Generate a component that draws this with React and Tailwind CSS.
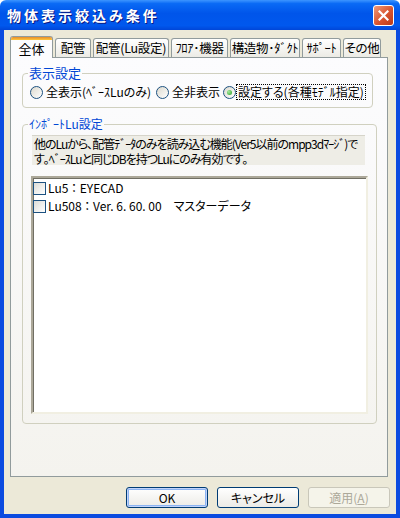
import React from 'react';

const TABS = [
  { label: '全体', w: 'w-[43px]', active: true },
  { label: '配管', w: 'w-[36px]' },
  { label: '配管(Lu設定)', w: 'w-[76px]' },
  { label: 'ﾌﾛｱ･機器', w: 'w-[57px]' },
  { label: '構造物･ﾀﾞｸﾄ', w: 'w-[70px]' },
  { label: 'ｻﾎﾟｰﾄ', w: 'w-[39px]' },
  { label: 'その他', w: 'w-[38px]' },
];

function Tab({ label, w, active }) {
  if (active) {
    return (
      <div className={`${w} relative z-10 -mb-px h-[22px] flex flex-col border border-b-0 border-[#919B9C] rounded-t-[3px] bg-[#FCFCFE] overflow-hidden`}>
        <div className="h-[3px] bg-[linear-gradient(to_bottom,#E68B2C,#FFC73C)]" />
        <div className="flex-1 flex items-center justify-center pb-[1px] text-[13px]">{label}</div>
      </div>
    );
  }
  return (
    <div className={`${w} h-[19px] flex items-center justify-center border border-b-0 border-[#919B9C] rounded-t-[3px] bg-[linear-gradient(to_bottom,#FFFFFF,#ECEBE5)] whitespace-nowrap text-[12.5px] tracking-[-0.3px]`}>
      {label}
    </div>
  );
}

function Radio({ checked }) {
  return (
    <span className="w-[13px] h-[13px] shrink-0 rounded-full border border-[#1C5180] bg-[linear-gradient(135deg,#DCD9CE,#FFFFFF)] flex items-center justify-center">
      {checked && <span className="w-[5px] h-[5px] rounded-full bg-[radial-gradient(circle_at_35%_35%,#A8EA9F,#21A121)]" />}
    </span>
  );
}

function Check() {
  return (
    <span className="w-[13px] h-[13px] shrink-0 border border-[#1C5180] bg-[linear-gradient(135deg,#DCDCD7,#FFFFFF)]" />
  );
}

function Button({ children, variant }) {
  const base = 'w-[82px] h-[21px] rounded-[3px] border flex items-center justify-center';
  if (variant === 'default') {
    return (
      <button className={`${base} border-[#003C74] bg-[linear-gradient(to_bottom,#FFFFFF,#ECEBE6)] shadow-[inset_0_0_0_1px_#C1D3FB,inset_0_0_0_2px_#8CB4F2]`}>
        {children}
      </button>
    );
  }
  if (variant === 'disabled') {
    return (
      <button className={`${base} border-[#C9C7BA] bg-[#F5F4EA] text-[#ACA899]`}>{children}</button>
    );
  }
  return (
    <button className={`${base} border-[#003C74] bg-[linear-gradient(to_bottom,#FFFFFF,#ECEBE6)]`}>{children}</button>
  );
}

export default function App() {
  return (
    <div className="w-[400px] h-[518px] flex flex-col font-['MS_UI_Gothic','Noto_Sans_CJK_JP',sans-serif] text-[12px] leading-[14px] text-black [font-feature-settings:'palt']">
      {/* title bar */}
      <div className="h-[30px] shrink-0 flex items-center justify-between rounded-t-[6px] bg-[linear-gradient(to_bottom,#3D95FF_0%,#0A6AF5_12%,#0055EA_45%,#0058EE_85%,#0046D8_100%)]">
        <span className="pl-[7px] text-white font-bold text-[14px] tracking-[3px] [text-shadow:1px_1px_#0A1883]">
          物体表示絞込み条件
        </span>
        <div className="mr-[6px] w-[21px] h-[21px] rounded-[3px] border border-white bg-[linear-gradient(135deg,#F09A7A,#D8542F_55%,#B83A18)] flex items-center justify-center">
          <svg width="11" height="11" viewBox="0 0 11 11">
            <path d="M1.5 1.5 L9.5 9.5 M9.5 1.5 L1.5 9.5" stroke="#fff" strokeWidth="2.2" strokeLinecap="square" />
          </svg>
        </div>
      </div>

      {/* body */}
      <div className="flex-1 flex flex-col bg-[#ECE9D8] border-x-4 border-b-4 border-[#0B4BE0]">
        <div className="pt-[6px] pl-[6px] pr-[8px] flex flex-col">
          <div className="h-[21px] flex items-end gap-[2px]">
            {TABS.map((t) => (
              <Tab key={t.label} {...t} />
            ))}
          </div>

          <div className="h-[420px] border border-[#919B9C] bg-[linear-gradient(to_bottom,#FCFCFE,#F4F3EE)] flex flex-col pl-[11px]">
            <fieldset className="mt-[8px] w-[351px] h-[42px] border border-[#D0D0BF] rounded-[4px]">
              <legend className="ml-[5px] px-[1px] text-[#0046D5] text-[13px]">表示設定</legend>
              <div className="mt-[5px] pl-[7px] flex items-center">
                <label className="w-[126px] flex items-center gap-[3px]">
                  <Radio />
                  <span>全表示(ﾍﾞｰｽLuのみ)</span>
                </label>
                <label className="w-[67px] flex items-center gap-[3px]">
                  <Radio />
                  <span>全非表示</span>
                </label>
                <label className="flex items-center gap-[1px]">
                  <Radio checked />
                  <span className="px-[1px] outline outline-1 outline-dotted outline-black">設定する(各種ﾓﾃﾞﾙ指定)</span>
                </label>
              </div>
            </fieldset>

            <fieldset className="mt-[9px] w-[355px] h-[307px] border border-[#D0D0BF] rounded-[4px]">
              <legend className="ml-[5px] px-[1px] text-[#0046D5]">ｲﾝﾎﾟｰﾄLu設定</legend>
              <div className="mt-[4px] ml-[9px] w-[333px] h-[30px] bg-[#EEEDE6] border-t border-[#D6D4CA] pl-[2px] leading-[15px] tracking-[-1px]">
                <p className="whitespace-nowrap">他のLuから､配管ﾃﾞｰﾀのみを読み込む機能(Ver5以前のmpp3dﾏｰｼﾞ)で</p>
                <p className="whitespace-nowrap">す｡ﾍﾞｰｽLuと同じDBを持つLuにのみ有効です｡</p>
              </div>
              <div className="mt-[11px] ml-[8px] w-[337px] h-[238px] bg-white border-2 border-t-[#ACA899] border-l-[#ACA899] border-b-[#F1EFE2] border-r-[#F1EFE2] shadow-[inset_1px_1px_0_#716F64] pt-[1px]">
                <div className="h-[18px] flex items-center gap-[2px]">
                  <Check />
                  <span>Lu5 ： EYECAD</span>
                </div>
                <div className="h-[18px] flex items-center gap-[2px]">
                  <Check />
                  <span>Lu508 ： Ver. 6. 60. 00　マスターデータ</span>
                </div>
              </div>
            </fieldset>
          </div>
        </div>

        <div className="mt-[10px] flex justify-end gap-[9px] pr-[6px]">
          <Button variant="default">OK</Button>
          <Button>キャンセル</Button>
          <Button variant="disabled">
            適用(<span className="underline">A</span>)
          </Button>
        </div>
      </div>
    </div>
  );
}
